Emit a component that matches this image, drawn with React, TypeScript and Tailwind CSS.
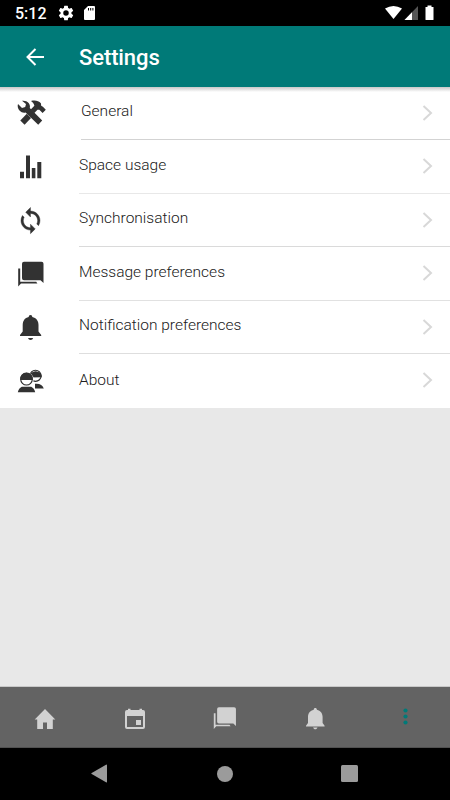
import type { ReactNode } from 'react';

const MessagesShape = () => (
  <>
    <path d="M9 3.700h17.500a2 2 0 0 1 2 2V25l-3-2.800H9a2 2 0 0 1-2-2V5.700a2 2 0 0 1 2-2z" />
    <path d="M3.200 10.500h2v13.300h16l1.200 1.700H6L3.200 28.500z" />
  </>
);

const rows: { label: string; height: string; icon: ReactNode; text: string; iconPos: string; line: string }[] = [
  {
    label: 'General',
    height: 'h-[53px]',
    iconPos: 'mt-[10px]',
    text: 'ml-[34px] mt-[14px]',
    line: 'bg-[#d3d3d3] ml-[81px]',
    icon: (
      <>
        <path d="M7 3.800c2.500-.4 5 .3 6.600 2.200 1.300 1.500 1.600 3.300 1.200 5L27.200 23.500l-4 4.200L10.600 15.500c-2.200.5-4.300-.1-5.900-1.700C2.900 11.900 2.200 9.500 3 7l4 3.900 3.200-.9.8-3.100z" />
        <path d="M16 4c4-1 7.600-.3 9.900 2.300l.3 2.500 1.700.9 2.900 3-3.200 3.300-3.300-3.200-1.800-.1-3.200 3.300-3.600-3.600 3.700-3.600c-.5-2.200-1.700-3.500-3.400-4.800z" />
        <path d="M11.800 16.800l4.200 4.200-6.400 6.700-4.300-4.200z" />
      </>
    ),
  },
  {
    label: 'Space usage',
    height: 'h-[54px]',
    iconPos: 'mt-[11px]',
    text: 'ml-[32px] mt-[15px]',
    line: 'bg-[#e8e8e8] ml-[79px]',
    icon: <path d="M5 20.800h4v6.400H5zM11 4.500h4v22.700h-4zM16.800 17h3.600v10.200h-3.600zM22.300 11h4v16.200h-4z" />,
  },
  {
    label: 'Synchronisation',
    height: 'h-[53px]',
    iconPos: 'mt-[10px]',
    text: 'ml-[32px] mt-[14px]',
    line: 'bg-[#dadada] ml-[79px]',
    icon: (
      <g transform="translate(1.200 2.300) scale(1.190)" stroke="#323232" strokeWidth="0.350">
        <path d="M12 4V1L8 5l4 4V6c3.310 0 6 2.690 6 6 0 1.010-.25 1.970-.7 2.800l1.460 1.460A7.930 7.930 0 0 0 20 12c0-4.420-3.580-8-8-8zm0 14c-3.310 0-6-2.690-6-6 0-1.010.25-1.970.7-2.800L5.240 7.740A7.930 7.930 0 0 0 4 12c0 4.420 3.580 8 8 8v3l4-4-4-4v3z" />
      </g>
    ),
  },
  {
    label: 'Message preferences',
    height: 'h-[54px]',
    iconPos: 'mt-[11px]',
    text: 'ml-[32px] mt-[15px]',
    line: 'bg-[#e1e1e1] ml-[79px]',
    icon: <MessagesShape />,
  },
  {
    label: 'Notification preferences',
    height: 'h-[53px]',
    iconPos: 'mt-[10px]',
    text: 'ml-[32px] mt-[14px]',
    line: 'bg-[#dedede] ml-[79px]',
    icon: (
      <>
        <path d="M15.500 4c1.200 0 1.700.7 1.800 2 4 1 6.200 3.800 6.200 8v6.500l2.700 3.500v1H5v-1l2.700-3.500V14c0-4.200 2-7 6-8 .1-1.300.6-2 1.800-2z" />
        <path d="M13 27h5.200c-.5 1.300-1.300 2-2.600 2s-2.100-.7-2.600-2z" />
      </>
    ),
  },
  {
    label: 'About',
    height: 'h-[54px]',
    iconPos: 'mt-[11px]',
    text: 'ml-[32px] mt-[16px]',
    line: 'bg-white ml-[79px]',
    icon: (
      <>
        <circle cx="20.500" cy="10.800" r="5.600" fill="white" stroke="#292929" strokeWidth="1.100" />
        <path d="M14.500 12.500a6.200 6.200 0 1 1 12.400-.3z" />
        <path d="M20 18.800c4.500-.5 7.700 1.200 8.800 4.700H20z" />
        <circle cx="11.500" cy="14.500" r="7.200" fill="white" />
        <circle cx="11.500" cy="14.200" r="5.800" fill="white" stroke="#292929" strokeWidth="1.100" />
        <path d="M5.200 15a6.400 6.400 0 1 1 12.600 0z" />
        <path d="M6.800 21.700h9.400c2 1 3.500 2.800 4 5.500H2.800c.5-2.700 2-4.500 4-5.500z" />
      </>
    ),
  },
];

function Status() {
  return (
    <div className="flex h-[26px] bg-black text-white">
      <span className="ml-[15px] mt-[2px] w-[43px] text-[16px] leading-6 font-medium">5:12</span>
      <svg className="mt-[5px] h-4 w-4" viewBox="1.500 1.500 21 21" fill="white">
        <path fillRule="evenodd" d="M19.140 12.940a7.500 7.500 0 0 0 0-1.880l2.030-1.580a.5.5 0 0 0 .12-.61l-1.920-3.320a.49.49 0 0 0-.59-.22l-2.390.96a7 7 0 0 0-1.620-.94L14.400 2.810a.48.48 0 0 0-.48-.41h-3.840a.47.47 0 0 0-.47.41l-.36 2.540a7.400 7.400 0 0 0-1.620.94l-2.390-.96a.48.48 0 0 0-.59.22L2.740 8.870a.47.47 0 0 0 .12.610l2.030 1.580a7.500 7.500 0 0 0 0 1.880l-2.030 1.580a.5.5 0 0 0-.12.610l1.920 3.320c.12.220.370.290.590.220l2.390-.96c.5.380 1.030.700 1.620.940l.36 2.540c.05.240.240.410.480.410h3.840c.240 0 .440-.170.470-.410l.36-2.540a7 7 0 0 0 1.620-.940l2.390.960c.220.080.470 0 .590-.220l1.920-3.320a.47.47 0 0 0-.120-.610zM12 15.600a3.600 3.600 0 1 1 0-7.200 3.600 3.600 0 0 1 0 7.200z" />
      </svg>
      <svg className="ml-[10px] mt-[6px] h-[14px] w-[11px]" viewBox="0 0 11 14">
        <path fill="white" d="M4 0h6q1 0 1 1v12q0 1-1 1H1q-1 0-1-1V4z" />
        <path stroke="black" strokeWidth="1" d="M4.500 2v2.500M6.700 2v2.500M8.900 2v2.500" />
      </svg>
      <svg className="ml-auto mr-[15px] mt-[5px] h-4 w-[50px]" viewBox="0 0 50 16">
        <path fill="white" d="M0 3.500Q8.500-1.500 17 3.500L8.500 14z" />
        <path fill="#555" d="M33 1v14H19.500z" />
        <path fill="white" d="M27 7.200V15h-7.500z" />
        <path fill="white" d="M42.500.5h4V2h2v12.500q0 .5-.6.500h-6.800q-.6 0-.6-.5V2h2z" />
      </svg>
    </div>
  );
}

export default function App() {
  return (
    <div className="flex h-[800px] w-[450px] flex-col overflow-hidden bg-[#e8e8e8] font-['Roboto',sans-serif]">
      <Status />
      <header className="flex h-[61px] items-center bg-[#007a78] text-white">
        <svg className="ml-[26px] h-[18px] w-[18px]" viewBox="0 0 18 18" fill="none" stroke="white" strokeWidth="2">
          <path d="M18 9H2M9.500 1L1.500 9l8 8" />
        </svg>
        <h1 className="ml-[35px] mt-[2px] text-[22px] leading-7 font-medium tracking-[-0.1px]">Settings</h1>
      </header>
      <main className="flex-1">
        <div className="bg-white bg-linear-to-b from-[#c8c8c8] to-white to-[5px]">
          {rows.map((r) => (
            <div key={r.label} className={`flex flex-col ${r.height}`}>
              <div className="flex min-h-0 flex-1">
                <svg className={`ml-[15px] h-8 w-8 shrink-0 ${r.iconPos}`} viewBox="0 0 32 32" fill="#323232">
                  {r.icon}
                </svg>
                <span className={`text-[15.500px] leading-5 font-light text-[#202020] ${r.text}`}>{r.label}</span>
                <svg className="ml-auto mr-[17px] mt-[18px] h-4 w-[11px]" viewBox="0 0 11 16" fill="none" stroke="#d8d8d8" strokeWidth="2">
                  <path d="M1.500 1L9 8l-7.500 7" />
                </svg>
              </div>
              <div className={`h-px ${r.line}`} />
            </div>
          ))}
        </div>
      </main>
      <nav className="flex h-[62px] border-t border-b border-t-[#c8c8c8] border-b-[#505050] bg-[#636363]">
        <div className="flex w-[90px] justify-center pt-[20px]">
          <svg className="h-6 w-6" viewBox="0 0 24 24" fill="#d2d2d2">
            <path d="M12 2l10.300 10.500h-2.500V22H14v-6.500h-4V22H4.200v-9.500H1.700z" />
          </svg>
        </div>
        <div className="flex w-[90px] justify-center pt-[20px]">
          <svg className="h-6 w-6" viewBox="0 0 24 24" fill="#d2d2d2">
            <path fillRule="evenodd" d="M5 1.700h2.500V3h9V1.700H19V3h1q2 0 2 2v15q0 2-2 2H4q-2 0-2-2V5q0-2 2-2h1zM4 9v11h16V9zM13 13h5v5h-5z" />
          </svg>
        </div>
        <div className="flex w-[90px] justify-center pt-[17px]">
          <svg className="h-[28px] w-[28px]" viewBox="0 0 32 32" fill="#d2d2d2">
            <MessagesShape />
          </svg>
        </div>
        <div className="flex w-[90px] justify-center pt-[20px]">
          <svg className="h-6 w-6" viewBox="0 0 24 24" fill="#d2d2d2">
            <path d="M12.300 1c1 0 1.500.6 1.600 1.700 3.600.9 5.700 3.500 5.700 7.300v6l2 2.700V19.500H3v-.8l2-2.700v-6c0-3.800 2.100-6.400 5.700-7.300C10.800 1.600 11.300 1 12.300 1zM10.100 20.500h4.400c-.4 1.200-1.200 1.800-2.200 1.800s-1.800-.6-2.200-1.800z" />
          </svg>
        </div>
        <div className="flex w-[90px] justify-center pt-[20px]">
          <svg className="h-6 w-6" viewBox="0 0 24 24" fill="#007a78">
            <circle cx="12.500" cy="3.500" r="2.100" />
            <circle cx="12.500" cy="9.500" r="2.100" />
            <circle cx="12.500" cy="15.500" r="2.100" />
          </svg>
        </div>
      </nav>
      <footer className="flex h-[52px] bg-black">
        <svg className="ml-[91px] mt-4 h-[19px] w-4" viewBox="0 0 16 19" fill="#9b9b9b">
          <path d="M15 .7q1-.5 1 .5v16.600q0 1-1 .5L.7 10q-.8-.5 0-1z" />
        </svg>
        <div className="ml-[110px] mt-[18px] h-4 w-4 rounded-full bg-[#9b9b9b]" />
        <div className="ml-[108px] mt-[17px] h-[17px] w-[17px] rounded-[1.500px] bg-[#9b9b9b]" />
      </footer>
    </div>
  );
}
